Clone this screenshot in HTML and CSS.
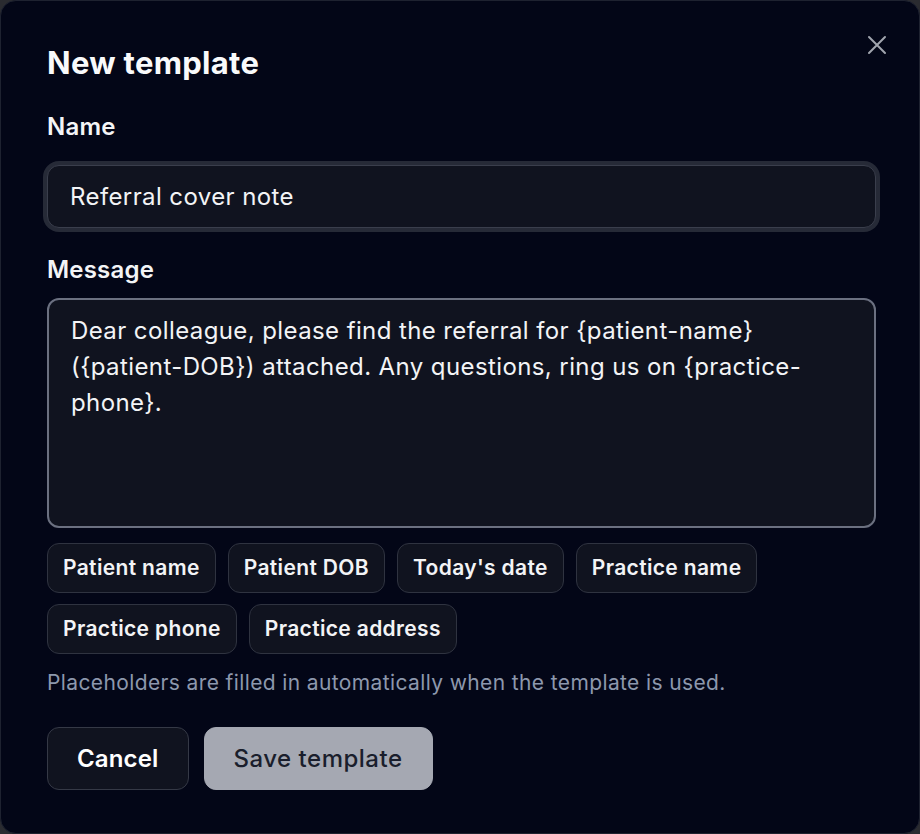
FILE: index.html
```html
<!DOCTYPE html>
<html lang="en">
<head>
<meta charset="utf-8">
<title>New template</title>
<link rel="stylesheet" href="styles.css">
</head>
<body>
<div class="dialog">
  <button class="close" aria-label="Close">
    <svg width="20" height="20" viewBox="0 0 20 20" fill="none" stroke="currentColor" stroke-width="2" stroke-linecap="round"><path d="M2 2 L18 18 M18 2 L2 18"/></svg>
  </button>
  <h1 class="title">New template</h1>
  <label class="label label-name">Name</label>
  <div class="input">Referral cover note</div>
  <label class="label label-msg">Message</label>
  <div class="textarea">Dear colleague, please find the referral for {patient-name} ({patient-DOB}) attached. Any questions, ring us on {practice-phone}.</div>
  <div class="chips">
    <span class="chip">Patient name</span>
    <span class="chip">Patient DOB</span>
    <span class="chip">Today's date</span>
    <span class="chip">Practice name</span>
    <span class="chip">Practice phone</span>
    <span class="chip">Practice address</span>
  </div>
  <p class="hint">Placeholders are filled in automatically when the template is used.</p>
  <div class="actions">
    <button class="btn btn-cancel">Cancel</button>
    <button class="btn btn-save">Save template</button>
  </div>
</div>
</body>
</html>
```
FILE: styles.css
```css
html, body {
  margin: 0;
  padding: 0;
  background: #2a2b30;
}
body {
  font-family: Inter, "Noto Sans", sans-serif;
  color: #f3f4f6;
}
.dialog {
  position: relative;
  box-sizing: border-box;
  width: 920px;
  height: 834px;
  background: #030617;
  border: 1px solid #1e2230;
  border-radius: 16px;
  padding: 44px 43px 0 46px;
}
.close {
  position: absolute;
  top: 34px;
  right: 32px;
  width: 20px;
  height: 20px;
  padding: 0;
  border: 0;
  background: none;
  color: #a1a5ae;
}
.close svg { display: block; }
.title {
  margin: 0;
  font-size: 31px;
  line-height: 36px;
  font-weight: 700;
  color: #f9fafb;
  letter-spacing: 0.3px;
}
.label {
  display: block;
  font-size: 24px;
  line-height: 32px;
  font-weight: 600;
  color: #f3f4f6;
  letter-spacing: 0.2px;
}
.label-name { margin-top: 30px; }
.input {
  margin-top: 22px;
  height: 63px;
  box-sizing: border-box;
  background: #10131f;
  border: 1px solid #3a3e4c;
  box-shadow: 0 0 0 4px #262a37;
  border-radius: 12px;
  padding: 0 22px;
  font-size: 24px;
  letter-spacing: 0.4px;
  line-height: 61px;
  color: #f3f4f6;
}
.label-msg { margin-top: 26px; }
.textarea {
  margin-top: 12px;
  height: 230px;
  box-sizing: border-box;
  background: #10131f;
  border: 2px solid #6b7080;
  border-radius: 12px;
  padding: 13px 22px;
  font-size: 24px;
  letter-spacing: 0.4px;
  line-height: 36px;
  color: #f3f4f6;
}
.chips {
  display: flex;
  flex-wrap: wrap;
  gap: 11px 12px;
  margin-top: 15px;
}
.chip {
  box-sizing: border-box;
  height: 50px;
  padding: 0 15px;
  background: #10131f;
  border: 1px solid #2f3340;
  border-radius: 12px;
  font-size: 21px;
  letter-spacing: 0.35px;
  line-height: 48px;
  font-weight: 600;
  color: #f3f4f6;
}
.hint {
  margin: 14px 0 0;
  font-size: 21px;
  letter-spacing: 0.38px;
  line-height: 30px;
  color: #8d98ad;
}
.actions {
  display: flex;
  gap: 15px;
  margin-top: 29px;
}
.btn {
  box-sizing: border-box;
  height: 63px;
  padding: 0 29px;
  border-radius: 12px;
  font-family: Inter, "Noto Sans", sans-serif;
  font-size: 24px;
  letter-spacing: 0.15px;
  font-weight: 600;
}
.btn-cancel {
  background: #10131f;
  border: 1px solid #353946;
  color: #ffffff;
}
.btn-save {
  background: #a5a8b2;
  border: 1px solid #a5a8b2;
  color: #1a1e2c;
  font-weight: 500;
  letter-spacing: 0.5px;
}
```
